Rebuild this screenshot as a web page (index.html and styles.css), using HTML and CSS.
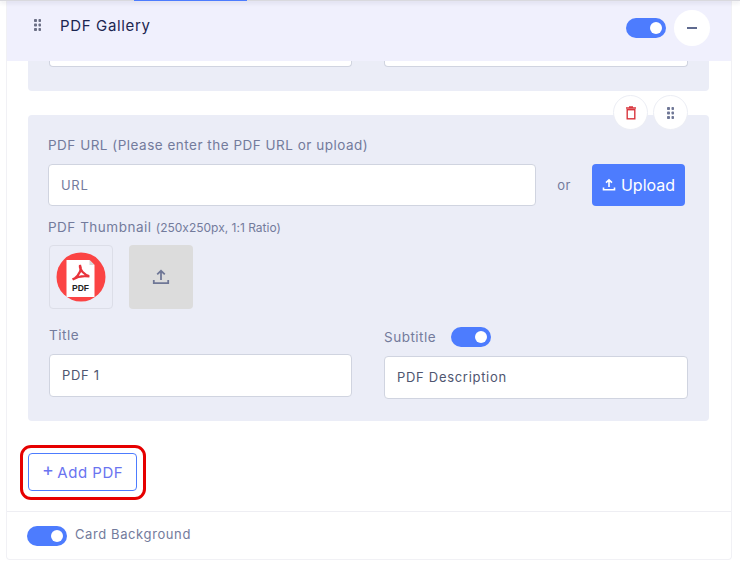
FILE: index.html
```html
<!DOCTYPE html>
<html lang="en">
<head>
  <meta charset="UTF-8" />
  <title>PDF Gallery</title>
  <link rel="stylesheet" href="styles.css">
</head>
<body>

  <div class="tab-strip"><span class="tab-active"></span></div>

  <div class="card">
    <!-- Section header -->
    <div class="card-header">
      <svg class="drag-icon" width="7" height="12" viewBox="0 0 7 12"><g fill="#6b6f85"><rect width="3" height="3" rx=".8"/><rect x="4.5" width="2.5" height="3" rx=".8"/><rect y="4.5" width="3" height="3" rx=".8"/><rect x="4.5" y="4.5" width="2.5" height="3" rx=".8"/><rect y="9" width="3" height="3" rx=".8"/><rect x="4.5" y="9" width="2.5" height="3" rx=".8"/></g></svg>
      <h2>PDF Gallery</h2>
      <span class="toggle"></span>
      <span class="collapse-btn"><span class="minus"></span></span>
    </div>

    <div class="card-body">
      <!-- Previous item, scrolled away -->
      <div class="panel panel-cut">
        <div class="stub"></div>
        <div class="stub"></div>
      </div>

      <div class="item">
        <div class="item-actions">
          <span class="round-btn">
            <svg width="12" height="14" viewBox="0 0 12 14" fill="none"><path d="M1 2h10M4 1h4" stroke="#d9363e" stroke-width="1.4"/><rect x="2.2" y="3.7" width="7.6" height="9.1" stroke="#d9363e" stroke-width="1.4"/></svg>
          </span>
          <span class="round-btn">
            <svg width="7" height="12" viewBox="0 0 7 12"><g fill="#6f7796"><rect width="3" height="3" rx=".8"/><rect x="4.5" width="2.5" height="3" rx=".8"/><rect y="4.5" width="3" height="3" rx=".8"/><rect x="4.5" y="4.5" width="2.5" height="3" rx=".8"/><rect y="9" width="3" height="3" rx=".8"/><rect x="4.5" y="9" width="2.5" height="3" rx=".8"/></g></svg>
          </span>
        </div>

        <div class="panel">
          <label class="field-label">PDF URL (Please enter the PDF URL or upload)</label>
          <div class="url-row">
            <input class="text-input" type="text" placeholder="URL" />
            <span class="or">or</span>
            <button class="upload-btn">
              <svg width="14" height="14" viewBox="0 0 14 14" fill="none" stroke="#fff" stroke-width="1.6"><path d="M7 9V2M4 4.6 7 1.8l3 2.8M1.5 9.5v2.2h11V9.5"/></svg>
              Upload
            </button>
          </div>

          <label class="field-label thumb-label">PDF Thumbnail <small>(250x250px, 1:1 Ratio)</small></label>
          <div class="thumb-row">
            <div class="thumb">
              <svg width="50" height="50" viewBox="0 0 50 50">
                <circle cx="25" cy="25" r="24.5" fill="#fb4444"/>
                <path d="M10.5 8h23l5 5v32h-28z" fill="#fff"/>
                <path d="M33.5 8l5 5h-5z" fill="#d8d8d8"/>
                <path d="M24 13c2 4 0 9-6 14M24 13c-1 5 5 10 9 11M16.5 27.500c5-3 11-4 17-3" fill="none" stroke="#e8333b" stroke-width="2.200"/>
                <text x="24.500" y="38.500" text-anchor="middle" class="pdf-mark">PDF</text>
              </svg>
            </div>
            <div class="thumb-upload">
              <svg width="18" height="18" viewBox="0 0 18 18" fill="none" stroke="#6f7796" stroke-width="1.8"><path d="M9 12V3M5.2 6.4 9 2.8l3.8 3.6M1.8 12v3.2h14.4V12"/></svg>
            </div>
          </div>

          <div class="title-row">
            <div class="title-col">
              <label class="field-label">Title</label>
              <input class="text-input filled" type="text" value="PDF 1" />
            </div>
            <div class="subtitle-col">
              <div class="subtitle-head">
                <label class="field-label">Subtitle</label>
                <span class="toggle"></span>
              </div>
              <input class="text-input filled" type="text" value="PDF Description" />
            </div>
          </div>
        </div>
      </div>

      <div class="add-ring">
        <button class="add-btn"><span class="plus">+</span>Add PDF</button>
      </div>
    </div>

    <div class="card-footer">
      <span class="toggle"></span>
      <span class="footer-label">Card Background</span>
    </div>
  </div>

</body>
</html>
```

FILE: styles.css
```css
* {
  box-sizing: border-box;
}

body {
  margin: 0;
  height: 566px;
  overflow: hidden;
  background-color: #fff;
  font-family: 'Inter', sans-serif;
  font-feature-settings: "calt" 0;
  color: #737b9c;
}

.tab-strip {
  position: relative;
  height: 1px;
  padding-left: 134px;
  background-color: #d9d9de;
  box-shadow: 0 1px 4px rgba(40, 40, 70, 0.3);
}

.tab-active {
  display: block;
  width: 113px;
  height: 1px;
  background-color: #4d7cfe;
}

.card {
  margin-left: 6px;
  width: 726px;
  height: 559px;
  border: 1px solid #f1f1f5;
  border-top: none;
  border-radius: 0 0 4px 4px;
}

/* Header */
.card-header {
  display: flex;
  align-items: center;
  height: 60px;
  padding: 0 21px 12px 27px;
  background-color: #f0f0fd;
}

.card-header h2 {
  margin: 0 0 0 19px;
  font-size: 15px;
  font-weight: 400;
  letter-spacing: 0.65px;
  color: #1b2550;
}

.drag-icon {
  flex-shrink: 0;
}

.toggle {
  position: relative;
  display: inline-block;
  flex-shrink: 0;
  width: 40px;
  height: 20px;
  border-radius: 10px;
  background-color: #4d7cfe;
}

.toggle::after {
  content: "";
  position: absolute;
  top: 4px;
  right: 4px;
  width: 12px;
  height: 12px;
  border-radius: 50%;
  background-color: #fff;
}

.card-header .toggle {
  margin-left: auto;
  margin-top: 6px;
}

.collapse-btn {
  display: flex;
  align-items: center;
  justify-content: center;
  width: 36px;
  height: 36px;
  margin-left: 8px;
  margin-top: 6px;
  border-radius: 50%;
  background-color: #fff;
}

.minus {
  width: 10px;
  height: 2px;
  background-color: #5f6a8f;
}

/* Body */
.card-body {
  height: 451px;
  padding: 0 22px 0 21px;
  border-bottom: 1px solid #eeeef3;
}

.panel {
  border-radius: 4px;
  background-color: #ebedf7;
  padding: 20px 24px 22px 20px;
}

.panel-cut {
  display: grid;
  grid-template-columns: 303px 304px;
  column-gap: 32px;
  align-items: start;
  height: 30px;
  padding: 0 21px;
  border-radius: 0 0 4px 4px;
}

.stub {
  height: 6px;
  background-color: #fff;
  border: 1px solid #d0d4e0;
  border-top: none;
  border-radius: 0 0 4px 4px;
}

.item {
  position: relative;
  margin-top: 24px;
}

.item-actions {
  position: absolute;
  top: -20px;
  right: 21px;
  display: flex;
  gap: 5px;
}

.round-btn {
  display: flex;
  align-items: center;
  justify-content: center;
  width: 35px;
  height: 35px;
  border: 1px solid #eceef5;
  border-radius: 50%;
  background-color: #fff;
}

.field-label {
  display: block;
  font-size: 13.5px;
  line-height: 20px;
  letter-spacing: 0.5px;
  color: #737b9c;
}

.field-label small {
  font-size: 12px;
  letter-spacing: 0;
}

.url-row {
  display: flex;
  align-items: center;
  margin-top: 9px;
}

.text-input {
  width: 100%;
  height: 42px;
  padding: 0 12px 1px;
  border: 1px solid #d0d4e0;
  border-radius: 4px;
  background-color: #fff;
  font-family: inherit;
  font-feature-settings: inherit;
  font-size: 13px;
  letter-spacing: 0.7px;
  color: #4f5670;
}

.text-input::placeholder {
  color: #737b9c;
  opacity: 1;
}

.url-row .text-input {
  width: 488px;
  flex-shrink: 0;
}

.or {
  width: 56px;
  text-align: center;
  font-size: 13px;
  letter-spacing: 0.3px;
}

.upload-btn {
  display: flex;
  align-items: center;
  justify-content: center;
  gap: 5px;
  width: 93px;
  height: 42px;
  padding: 0;
  border: none;
  border-radius: 4px;
  background-color: #4d7cfe;
  color: #fff;
  font-family: inherit;
  font-size: 16px;
}

.thumb-label {
  margin-top: 11px;
}

.thumb-row {
  display: flex;
  gap: 16px;
  margin-top: 7px;
  margin-left: 1px;
}

.thumb {
  display: flex;
  align-items: center;
  justify-content: center;
  width: 64px;
  height: 64px;
  border: 1px solid #dcdee8;
  border-radius: 4px;
}

.pdf-mark {
  font-family: 'Liberation Sans', sans-serif;
  font-size: 8.5px;
  font-weight: 700;
  fill: #222;
}

.thumb-upload {
  display: flex;
  align-items: center;
  justify-content: center;
  width: 64px;
  height: 64px;
  border-radius: 4px;
  background-color: #dcdcdc;
}

.title-row {
  display: grid;
  grid-template-columns: 303px 304px;
  column-gap: 32px;
  margin-top: 16px;
  margin-left: 1px;
}

.title-col .field-label {
  margin-bottom: 9px;
}

.title-col .text-input {
  height: 43px;
}

.subtitle-head {
  display: flex;
  align-items: center;
  gap: 15px;
  height: 20px;
  margin-top: 2px;
  margin-bottom: 9px;
}

.subtitle-col .text-input {
  height: 43px;
}

.add-ring {
  display: inline-block;
  margin: 24px 0 0 -8px;
  padding: 5px 6px 6px 5px;
  border: 3px solid #e60000;
  border-radius: 11px;
}

.add-btn {
  display: flex;
  align-items: center;
  justify-content: center;
  width: 109px;
  height: 38px;
  padding: 0;
  border: 1px solid #4d7cfe;
  border-radius: 4px;
  background-color: #fff;
  color: #6a74f0;
  font-family: inherit;
  font-size: 15px;
  letter-spacing: 0.5px;
}

.plus {
  font-size: 18px;
  line-height: 18px;
  margin-right: 3px;
  margin-top: -4px;
}

/* Footer */
.card-footer {
  display: flex;
  align-items: center;
  gap: 8px;
  height: 47px;
  padding: 0 20px;
}

.footer-label {
  margin-top: -3px;
  font-size: 13px;
  letter-spacing: 0.6px;
}
```
